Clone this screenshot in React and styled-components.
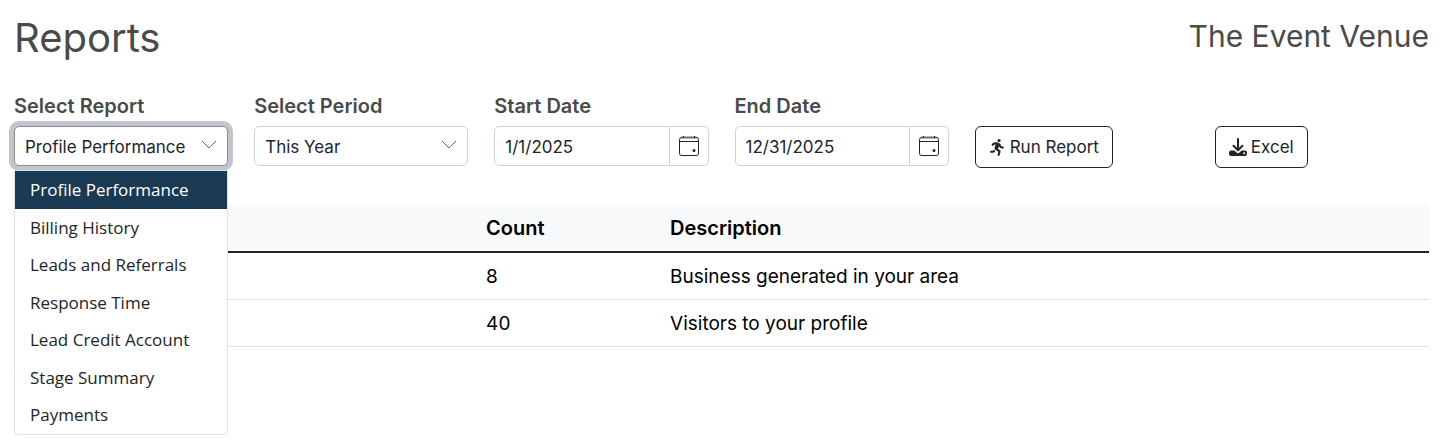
import React, { useState, useRef, useEffect } from 'react';
import styled, { createGlobalStyle } from 'styled-components';
import { FaPersonRunning } from 'react-icons/fa6';

const GlobalStyle = createGlobalStyle`
  *, *::before, *::after {
    box-sizing: border-box;
  }
  body {
    margin: 0;
    background: #fff;
    color: #000;
    font-family: Inter, "Liberation Sans", sans-serif;
    font-size: 19px;
  }
  button, input, select {
    font: inherit;
    color: inherit;
  }
`;

const Page = styled.main`
  min-height: 100vh;
  padding: 12px 18px 12px 14px;
`;

const HeaderBar = styled.header`
  display: flex;
  justify-content: space-between;
  align-items: flex-start;
  color: #4a4a4a;
`;

const Title = styled.h1`
  margin: 0;
  font-size: 40px;
  font-weight: 400;
  line-height: 52px;
`;

const VenueName = styled.h2`
  margin: 0;
  font-size: 30px;
  font-weight: 400;
  line-height: 48px;
`;

const Filters = styled.form`
  display: grid;
  grid-template-columns: repeat(6, minmax(0, 1fr));
  column-gap: 26px;
  align-items: start;
  margin-top: 26px;
`;

const Field = styled.div`
  position: relative;
`;

const Label = styled.label`
  display: block;
  margin-bottom: 4px;
  color: #4a4a4a;
  font-size: 20px;
  font-weight: 600;
  line-height: 32px;
`;

const Control = styled.div`
  display: flex;
  align-items: center;
  height: 40px;
  background: #fff;
  border: 1px solid ${(props) => (props.$focused ? '#8a8c90' : '#ced4da')};
  border-radius: 5px;
  box-shadow: ${(props) => (props.$focused ? '0 0 0 5px #c2c6cc' : 'none')};
  color: #212529;
  font-size: 17px;
`;

const SelectBox = styled.select`
  appearance: none;
  flex: 1;
  min-width: 0;
  height: 100%;
  padding: 2px 0 0 10px;
  background: transparent;
  border: none;
  outline: none;
`;

const ChevronIcon = styled.svg`
  flex: none;
  width: 16px;
  height: 16px;
  margin-right: 10px;
  pointer-events: none;
`;

const DateInput = styled.input`
  flex: 1;
  min-width: 0;
  height: 100%;
  padding: 2px 10px 0;
  background: transparent;
  border: none;
  outline: none;
`;

const CalendarButton = styled.button`
  display: flex;
  align-items: center;
  justify-content: center;
  flex: none;
  width: 39px;
  height: 100%;
  padding: 0;
  background: transparent;
  border: none;
  border-left: 1px solid #ced4da;
  cursor: pointer;
`;

const Menu = styled.ul`
  position: absolute;
  top: 100%;
  left: 0;
  right: 0;
  z-index: 1;
  margin: 4px 0 0;
  padding: 0;
  list-style: none;
  background: #fff;
  border: 1px solid #dee2e6;
  border-radius: 0 0 4px 4px;
`;

const MenuItem = styled.li`
  padding: 6px 15px;
  background: ${(props) => (props.$active ? '#1a3a54' : 'transparent')};
  color: ${(props) => (props.$active ? '#fff' : '#212529')};
  font-family: "Open Sans", "Noto Sans", sans-serif;
  font-size: 17px;
  line-height: 1.5;
  cursor: pointer;
`;

const ActionButton = styled.button`
  display: flex;
  align-items: center;
  justify-self: start;
  gap: 4px;
  height: 42px;
  margin-top: 36px;
  padding: 0 13px;
  background: #fff;
  border: 1px solid #212529;
  border-radius: 6px;
  color: #212529;
  font-size: 17px;
  white-space: nowrap;
  cursor: pointer;
`;

const ReportTable = styled.table`
  width: 100%;
  margin-top: 37px;
  border-collapse: separate;
  border-spacing: 0;
  table-layout: fixed;
`;

const HeadCell = styled.th`
  width: ${(props) => props.$width};
  height: 48px;
  padding: 0 8px;
  background: #f8f9fb;
  border-bottom: 2px solid #212529;
  font-size: 20px;
  font-weight: 600;
  text-align: left;
`;

const Cell = styled.td`
  height: 47px;
  padding: 0 8px;
  border-bottom: 1px solid #dee2e6;
`;

const reports = [
  'Profile Performance',
  'Billing History',
  'Leads and Referrals',
  'Response Time',
  'Lead Credit Account',
  'Stage Summary',
  'Payments',
];

const rows = [
  { count: 8, description: 'Business generated in your area' },
  { count: 40, description: 'Visitors to your profile' },
];

function Chevron() {
  return (
    <ChevronIcon viewBox="0 0 16 16" fill="none" stroke="#5f6b76" aria-hidden="true">
      <path d="M1 3l7 7 7-7" />
    </ChevronIcon>
  );
}

function CalendarIcon() {
  return (
    <svg width="20" height="20" viewBox="0 0 20 20" fill="none" aria-hidden="true">
      <rect x="0.5" y="1.5" width="19" height="18" rx="2" stroke="#212529" />
      <path d="M2 1.5h16" stroke="#6c6c6c" strokeWidth="2" />
      <path d="M1 5.5h18" stroke="#212529" />
      <path d="M4.5 0v2M15.5 0v2" stroke="#212529" />
      <circle cx="15" cy="14.5" r="1.5" fill="#212529" />
    </svg>
  );
}

function DownloadIcon() {
  return (
    <svg width="18" height="18" viewBox="0 0 18 18" fill="none" aria-hidden="true">
      <path
        d="M9 1v11M4.5 7.8l4.5 4.4 4.5-4.4"
        stroke="currentColor"
        strokeWidth="2"
        strokeLinecap="round"
        strokeLinejoin="round"
      />
      <path
        fill="currentColor"
        fillRule="evenodd"
        d="M2 12.5h3.4l2.2 2.1a2 2 0 0 0 2.8 0l2.2-2.1H16a2 2 0 0 1 2 2V16a2 2 0 0 1-2 2H2a2 2 0 0 1-2-2v-1.5a2 2 0 0 1 2-2zm13.2 3.7a1 1 0 1 0 0-2 1 1 0 0 0 0 2z"
      />
    </svg>
  );
}

function DateField({ id, label, value, onChange }) {
  return (
    <Field>
      <Label htmlFor={id}>{label}</Label>
      <Control>
        <DateInput id={id} type="text" value={value} onChange={(e) => onChange(e.target.value)} />
        <CalendarButton type="button" aria-label={`Pick ${label}`}>
          <CalendarIcon />
        </CalendarButton>
      </Control>
    </Field>
  );
}

export default function App() {
  const [report, setReport] = useState('Profile Performance');
  const [period, setPeriod] = useState('This Year');
  const [startDate, setStartDate] = useState('1/1/2025');
  const [endDate, setEndDate] = useState('12/31/2025');
  const [menuOpen, setMenuOpen] = useState(true);
  const menuRef = useRef(null);

  useEffect(() => {
    const handleClickOutside = (event) => {
      if (menuRef.current && !menuRef.current.contains(event.target)) {
        setMenuOpen(false);
      }
    };
    document.addEventListener('mousedown', handleClickOutside);
    return () => {
      document.removeEventListener('mousedown', handleClickOutside);
    };
  }, []);

  const toggleMenu = (event) => {
    event.preventDefault(); // keep the native popup closed
    setMenuOpen(!menuOpen);
  };

  const pickReport = (name) => {
    setReport(name);
    setMenuOpen(false);
  };

  return (
    <Page>
      <GlobalStyle />
      <HeaderBar>
        <Title>Reports</Title>
        <VenueName>The Event Venue</VenueName>
      </HeaderBar>

      <Filters onSubmit={(e) => e.preventDefault()}>
        <Field ref={menuRef}>
          <Label htmlFor="report">Select Report</Label>
          <Control $focused={menuOpen}>
            <SelectBox
              id="report"
              value={report}
              onMouseDown={toggleMenu}
              onChange={(e) => setReport(e.target.value)}
            >
              {reports.map((name) => (
                <option key={name}>{name}</option>
              ))}
            </SelectBox>
            <Chevron />
          </Control>
          {menuOpen && (
            <Menu role="listbox" aria-label="Select Report">
              {reports.map((name) => (
                <MenuItem
                  key={name}
                  role="option"
                  aria-selected={name === report}
                  $active={name === report}
                  onClick={() => pickReport(name)}
                >
                  {name}
                </MenuItem>
              ))}
            </Menu>
          )}
        </Field>

        <Field>
          <Label htmlFor="period">Select Period</Label>
          <Control>
            <SelectBox id="period" value={period} onChange={(e) => setPeriod(e.target.value)}>
              <option>This Year</option>
            </SelectBox>
            <Chevron />
          </Control>
        </Field>

        <DateField id="start" label="Start Date" value={startDate} onChange={setStartDate} />
        <DateField id="end" label="End Date" value={endDate} onChange={setEndDate} />

        <ActionButton type="submit">
          <FaPersonRunning size={17} />
          Run Report
        </ActionButton>
        <ActionButton type="button">
          <DownloadIcon />
          Excel
        </ActionButton>
      </Filters>

      <ReportTable>
        <thead>
          <tr>
            <HeadCell $width="32.8%" />
            <HeadCell $width="13%">Count</HeadCell>
            <HeadCell>Description</HeadCell>
          </tr>
        </thead>
        <tbody>
          {rows.map((row) => (
            <tr key={row.description}>
              <Cell />
              <Cell>{row.count}</Cell>
              <Cell>{row.description}</Cell>
            </tr>
          ))}
        </tbody>
      </ReportTable>
    </Page>
  );
}
